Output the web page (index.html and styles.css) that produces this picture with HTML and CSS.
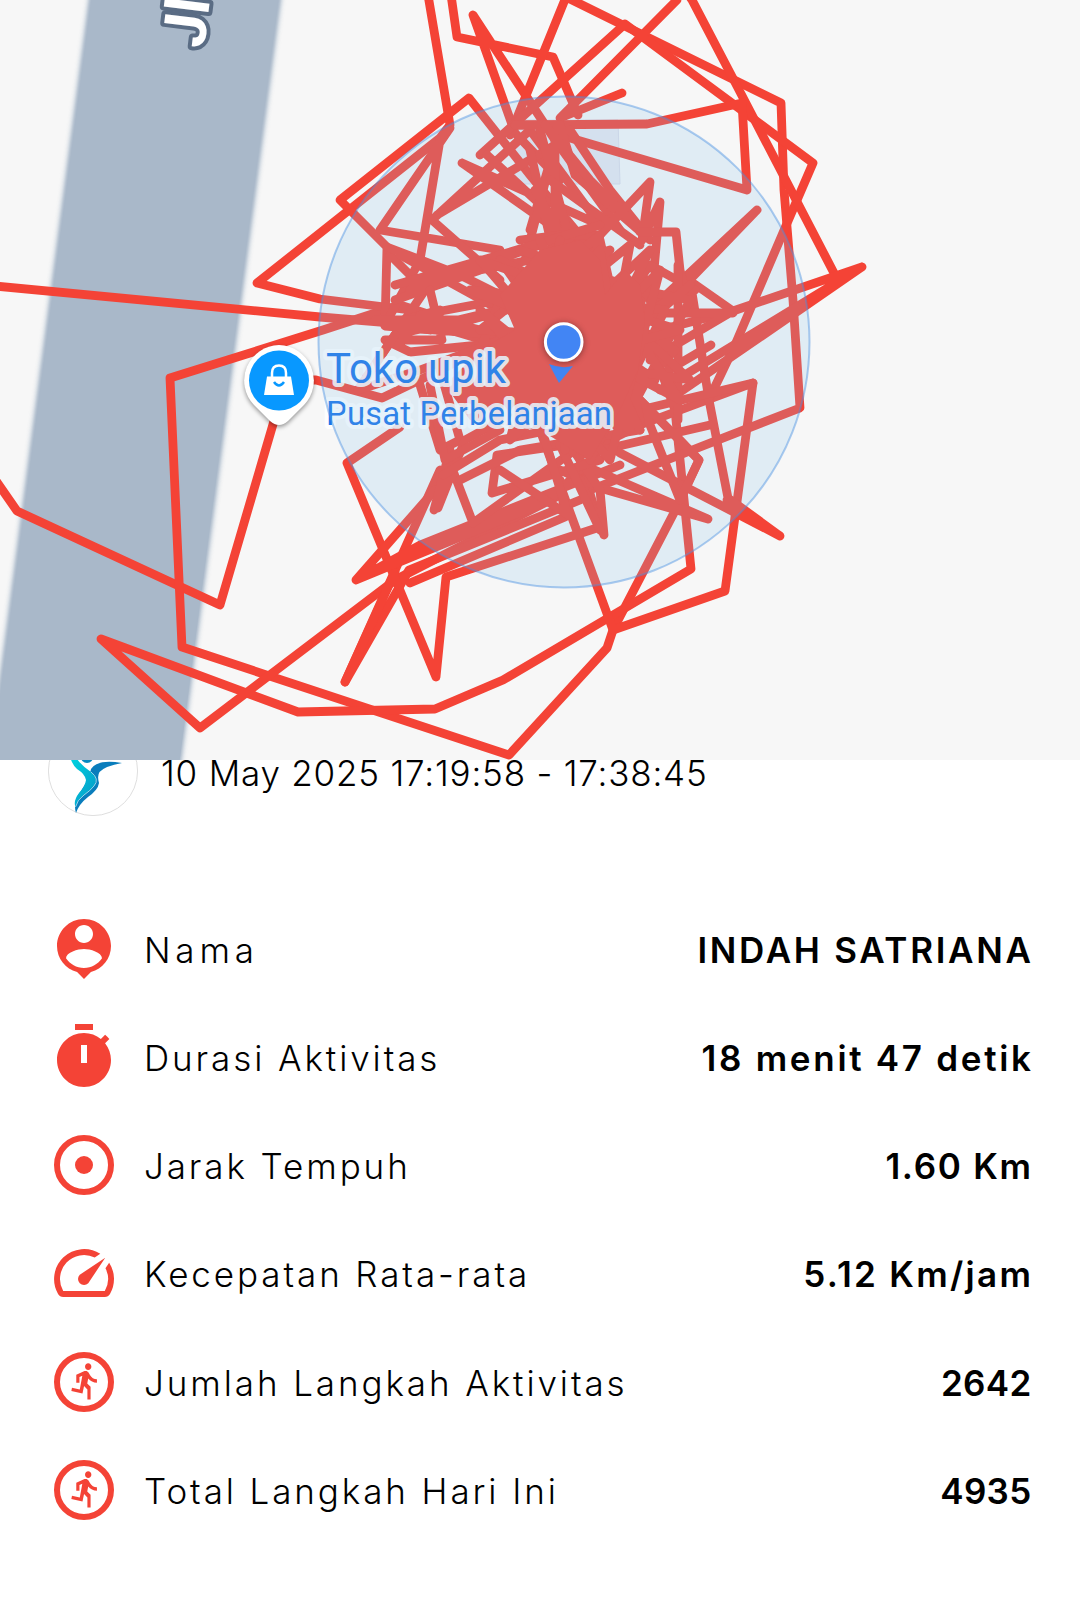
FILE: index.html
```html
<!DOCTYPE html>
<html lang="id">

<head>
  <meta charset="UTF-8">
  <meta name="viewport" content="width=device-width, initial-scale=1.0">
  <title>Aktivitas</title>
  <link rel="stylesheet" href="styles.css">
</head>

<body>

  <div class="map">
    <svg width="1080" height="760" viewBox="0 0 1080 760">
      <!-- road -->
      <path class="road-edge" d="M88 -5L-13 765H182L283 -5Z" />
      <path class="road" d="M92 -5L-9 765H179L279 -5Z" />
      <text class="road-name" transform="translate(204 49) rotate(-83)">Jl.</text>
      <path class="building" d="M515 120H618L620 184H515Z" />

      <!-- outer track -->
      <g class="track">
        <path d="M-5 286L320 317L440 327L500 345" />
        <path d="M-10 472L17 511L220 605L286 380L316 380L382 398L430 375" />
        <path d="M440 318L400 305L323 330L170 378L182 647L509 755L607 648L613 630L677 507L699 460L640 400" />
        <path d="M560 495L395 580L200 728L101 639L298 712L435 709L503 680L691 569L675 410L650 340" />
        <path d="M540 430L613 630L725 591L753 383L640 425L580 455" />
        <path d="M440 470L345 682L409 570L580 500" />
        <path d="M345 682L395 572M400 427L347 463L436 677L446 577L600 527L580 460" />
        <path d="M435 490L356 580L550 500L610 440M356 580L420 545L620 465M410 583L565 517L560 480" />
        <path d="M410 310L320 299L257 283L440 138L450 125L428 -5" />
        <path d="M430 330L385 325L387 247L340 200L469 98L530 175L600 260" />
        <path d="M390 255L425 290L358 390" />
        <path d="M450 128L380 230L500 250M440 140L420 260L385 325L440 310" />
        <path d="M451 -5L457 37L553 57L578 115M620 230L555 140L473 15L515 133L560 180" />
        <path d="M510 135L566 -3L781 103L784 190L793 300L800 408L590 490" />
        <path d="M480 155L625 24L813 163L785 228L735 345L711 395" />
        <path d="M677 0L560 118L622 93" />
        <path d="M685 -10L692 0L738 88L835 275" />
        <path d="M515 125L647 124L742 103L747 190L560 135" />
        <path d="M660 330L733 311L862 267L676 395M862 267L660 390M733 311L693 283" />
        <path d="M690 280L709 400L728 498L780 536L620 453L590 430M727 500L780 536" />
        <path d="M650 310L757 210L680 290L640 315M757 210L680 287" />
        <path d="M590 468L708 519L600 488L560 470" />
        <path d="M604 535L600 490L560 430M604 535L580 480" />
      </g>

      <!-- track inside of the accuracy circle -->
      <g class="track">
        <path d="M462 163L600 225L530 130L432 220L500 280M437 215L555 145L530 230M487 155L600 260L462 163" />
        <path d="M515 125L560 125L575 175L650 240M560 125L525 260M555 125L555 260L530 150M570 130L610 190L650 240M540 130L575 260L535 190" />
        <path d="M545 125L590 180L640 230M550 180L640 245M520 240L560 235L600 235L650 182L642 240L660 202L654 270" />
        <path d="M387 247L460 275L520 305M400 255L500 310M395 285L500 255L600 225M410 290L540 245M395 300L480 270L580 250" />
        <path d="M430 290L442 340M375 320L470 320L560 295M385 326L500 335L420 315L500 300M395 335L500 310L480 345L410 352L385 340L440 340" />
        <path d="M395 335L358 390L420 370L500 340M420 385L440 450L460 440L440 370L480 350L500 300" />
        <path d="M438 508L465 440L520 410M434 510L450 450M473 523L445 450M473 523L575 450M492 493L497 455L600 440M492 493L600 460" />
        <path d="M443 475L500 440L600 420M460 480L520 450L640 430M430 385L445 460L500 430" />
        <path d="M545 440L568 515L500 470M560 445L600 530M640 232H676L680 270L690 310M600 260L610 320L650 265L695 290" />
        <path d="M678 265V420M640 265L670 370M733 313H640M650 360L733 311M660 375L711 345M640 410L753 383M580 455L710 425" />
        <path d="M680 440L699 460L680 500L640 400M600 425L640 400L699 460" />
        <path d="M520 250L640 290L545 420L670 300L500 390L650 250L560 430L600 235L480 330L660 340L500 260L620 430L690 300L540 270L610 250L500 410L655 380L530 290L675 350L580 450L650 280L470 370L640 420L600 240L520 430L690 285" />
        <path d="M470 400L600 440L665 310L470 290L640 360L590 460L630 245L500 350L690 380L550 250L490 420L640 300L620 430L510 310L680 400L575 245L565 450" />
        <path d="M560 240L510 440L650 320L480 260L600 400L540 240L640 430L580 300L680 330L490 380L600 250L630 430L480 310L610 460L660 270L530 400" />
      </g>
      <path class="core" d="M500 295L540 250L580 240L600 260L605 295L625 270L640 285L645 320L638 370L620 410L590 460L540 430L470 420L445 385L480 350L515 330Z" />

      <!-- shop pin -->
      <g class="pin">
        <path class="pin-shape" d="M279 345a35.500 35.500 0 0 1 25 60L288 421q-9 8-18 0L254 405a35.500 35.500 0 0 1 25-60Z" />
        <circle class="pin-fill" cx="279" cy="380.500" r="30" />
        <path class="bag" d="M267 376.500h24l3 18.500h-30Z" />
        <path class="bag-handle" d="M272 378v-5q0-7.500 7-7.500t7 7.500v5" />
        <path class="bag-smile" d="M274 382q5 7 10 0" />
      </g>
      <text class="place" x="326" y="383" textLength="180">Toko upik</text>
      <text class="place-type" x="326" y="425" textLength="286">Pusat Perbelanjaan</text>

      <!-- current location -->
      <circle class="accuracy" cx="564" cy="342" r="245.500" />
      <path class="heading" d="M549 364q12 5 24 2L559 383Z" />
      <circle class="me" cx="563.700" cy="342" r="18.300" />
    </svg>
  </div>

  <div class="header">
    <svg class="logo" viewBox="0 0 90 90">
      <defs>
        <linearGradient id="cyan" x1="0" y1="0" x2="1" y2="1">
          <stop offset="0" stop-color="#00d5e0" />
          <stop offset="1" stop-color="#0795c6" />
        </linearGradient>
      </defs>
      <circle cx="45" cy="45" r="44.600" fill="#fff" stroke="#d5d5d5" stroke-width=".8" />
      <circle cx="39" cy="30.500" r="6.500" fill="#0788bf" />
      <path d="M43 43Q49 33 74 37Q57 40 51.500 46Q49 50 51 57Q50 64 40 71Q31 78 28 87Q25 77 31 68L41 52Z" fill="#0a7dbc" />
      <path d="M22 31L29 33Q34 40 43 46Q51 52 46 60Q42 65 36 69Q29 74 27.500 81Q25 75 31 67Q37 61 38 54Q37 48 29 43Q25 40 22 31Z" fill="url(#cyan)" />
      <path d="M43 46Q52 53 46 60Q42 65 36 69Q29 74 27.500 81" fill="none" stroke="#bfe7f3" stroke-width=".8" />
    </svg>
    <span class="date">10 May 2025 17:19:58 - 17:38:45</span>
  </div>

  <ul class="list">
    <li class="item">
      <svg class="icon" viewBox="0 0 24 24"><path d="M12 2c-4.970 0-9 4.030-9 9 0 4.170 2.840 7.670 6.690 8.690L12 22l2.310-2.310C18.160 18.670 21 15.170 21 11c0-4.970-4.030-9-9-9zm0 2c1.660 0 3 1.340 3 3s-1.340 3-3 3-3-1.340-3-3 1.340-3 3-3zm0 14.300c-2.500 0-4.710-1.280-6-3.220.03-1.990 4-3.080 6-3.080 1.990 0 5.970 1.090 6 3.080-1.290 1.940-3.500 3.220-6 3.220z" /></svg>
      <span class="name short">Nama</span>
      <span class="value wide">INDAH SATRIANA</span>
    </li>
    <li class="item">
      <svg class="icon" viewBox="0 0 24 24"><path d="M15 1H9v2h6V1zm-4 13h2V8h-2v6zm8.030-6.610l1.420-1.420c-.43-.51-.9-.99-1.410-1.410l-1.420 1.420C16.070 4.740 14.120 4 12 4c-4.970 0-9 4.030-9 9s4.020 9 9 9 9-4.030 9-9c0-2.120-.74-4.070-1.970-5.610z" /></svg>
      <span class="name">Durasi Aktivitas</span>
      <span class="value wide">18 menit 47 detik</span>
    </li>
    <li class="item">
      <svg class="icon" viewBox="0 0 24 24"><circle class="ring" cx="12" cy="12" r="9" /><circle cx="12" cy="12" r="3" /></svg>
      <span class="name">Jarak Tempuh</span>
      <span class="value">1.60 Km</span>
    </li>
    <li class="item">
      <svg class="icon" viewBox="0 0 24 24"><path d="M20.380 8.570l-1.230 1.850a8 8 0 0 1-.22 7.580H5.070A8 8 0 0 1 15.580 6.850l1.850-1.230A10 10 0 0 0 3.350 19a2 2 0 0 0 1.720 1h13.850a2 2 0 0 0 1.740-1 10 10 0 0 0-.27-10.440zm-9.790 6.840a2 2 0 0 0 2.830 0l5.660-8.490-8.490 5.660a2 2 0 0 0 0 2.830z" /></svg>
      <span class="name">Kecepatan Rata-rata</span>
      <span class="value speed">5.12 Km/jam</span>
    </li>
    <li class="item">
      <svg class="icon" viewBox="0 0 24 24"><circle class="ring" cx="12" cy="12" r="9" /><path id="run" transform="translate(6.250 4.950) scale(.53 .56)" d="M13.490 5.480c1.100 0 2-.9 2-2s-.9-2-2-2-2 .9-2 2 .9 2 2 2zm-3.600 13.900l1-4.400 2.100 2v6h2v-7.500l-2.100-2 .6-3c1.300 1.500 3.300 2.500 5.500 2.500v-2c-1.900 0-3.500-1-4.300-2.400l-1-1.600c-.4-.6-1-1-1.700-1-.3 0-.5.1-.8.1l-5.200 2.200v4.700h2v-3.400l1.800-.7-1.600 8.100-4.900-1-.4 2 7 1.400z" /></svg>
      <span class="name">Jumlah Langkah Aktivitas</span>
      <span class="value steps">2642</span>
    </li>
    <li class="item">
      <svg class="icon" viewBox="0 0 24 24"><circle class="ring" cx="12" cy="12" r="9" /><use href="#run" /></svg>
      <span class="name">Total Langkah Hari Ini</span>
      <span class="value steps">4935</span>
    </li>
  </ul>

</body>

</html>
```
FILE: styles.css
```css
* {
  margin: 0;
  padding: 0;
  box-sizing: border-box;
  list-style: none;
}

body {
  background: #fff;
  color: #000;
  font-family: Inter, "Liberation Sans", sans-serif;
}

/* map */
.map {
  position: relative;
  z-index: 1;
  height: 760px;
  background: #f7f7f7;
  overflow: hidden;
}

.map svg {
  display: block;
}

.road-edge {
  fill: #a9b8c9;
  stroke: #e0e5ea;
  stroke-width: 3px;
  filter: blur(1.5px);
}

.road {
  fill: #a9b8c9;
}

.road-name {
  font: bold 60px Roboto, sans-serif;
  fill: #fff;
  stroke: #5a6c84;
  stroke-width: 8px;
  stroke-linejoin: round;
  paint-order: stroke;
}

.building {
  fill: #e8e8ef;
  stroke: #dcdce8;
}

.track {
  fill: none;
  stroke: #f44336;
  stroke-width: 8.8px;
  stroke-linejoin: round;
  stroke-linecap: round;
}

.core {
  fill: #f44336;
}

.accuracy {
  fill: rgba(137, 197, 237, .2);
  stroke: rgba(74, 144, 226, .45);
  stroke-width: 2px;
}

.pin {
  filter: drop-shadow(0 2px 2px rgba(0, 0, 0, .4));
}

.pin-shape {
  fill: #fff;
}

.pin-fill {
  fill: #0898ff;
}

.bag {
  fill: #fff;
}

.bag-handle {
  fill: none;
  stroke: #fff;
  stroke-width: 2.5px;
}

.bag-smile {
  fill: none;
  stroke: #0898ff;
  stroke-width: 2.5px;
}

.place,
.place-type {
  font-family: Roboto, sans-serif;
  fill: #1a73e8;
  stroke: #fff;
  stroke-opacity: .88;
  stroke-width: 8px;
  stroke-linejoin: round;
  paint-order: stroke;
}

.place {
  font-size: 42px;
}

.place-type {
  font-size: 33px;
}

.heading {
  fill: #4285f4;
}

.me {
  fill: #4285f4;
  stroke: #fff;
  stroke-width: 3px;
  filter: drop-shadow(0 1px 3px rgba(0, 0, 0, .4));
}

/* header, its top is covered by the map */
.header {
  display: flex;
  align-items: center;
  gap: 23px;
  height: 90px;
  margin-top: -34px;
  padding-left: 48px;
}

.logo {
  width: 90px;
  height: 90px;
}

.date {
  padding-top: 3px;
  font-size: 35px;
  font-weight: 300;
  letter-spacing: .8px;
  white-space: nowrap;
}

/* detail */
.list {
  padding: 78.500px 48px 0;
}

.item {
  display: flex;
  align-items: center;
  height: 108.25px;
}

.icon {
  width: 72px;
  height: 72px;
  margin-right: 24px;
  fill: #f44336;
  fill-rule: evenodd;
}

.ring {
  fill: none;
  stroke: #f44336;
  stroke-width: 2px;
}

.name {
  flex: 1;
  padding-top: 2px;
  font-size: 35px;
  font-weight: 300;
  letter-spacing: 2.9px;
  white-space: nowrap;
}

.name.short {
  letter-spacing: 4.8px;
}

.value {
  padding-top: 2px;
  font-size: 35px;
  font-weight: 600;
  letter-spacing: 1.7px;
  margin-right: -.7px;
  white-space: nowrap;
}

.value.wide {
  letter-spacing: 2.7px;
  margin-right: -1.7px;
}

.value.speed {
  letter-spacing: 2.3px;
  margin-right: -1.3px;
}

.value.steps {
  letter-spacing: .3px;
  margin-right: .5px;
}
```
